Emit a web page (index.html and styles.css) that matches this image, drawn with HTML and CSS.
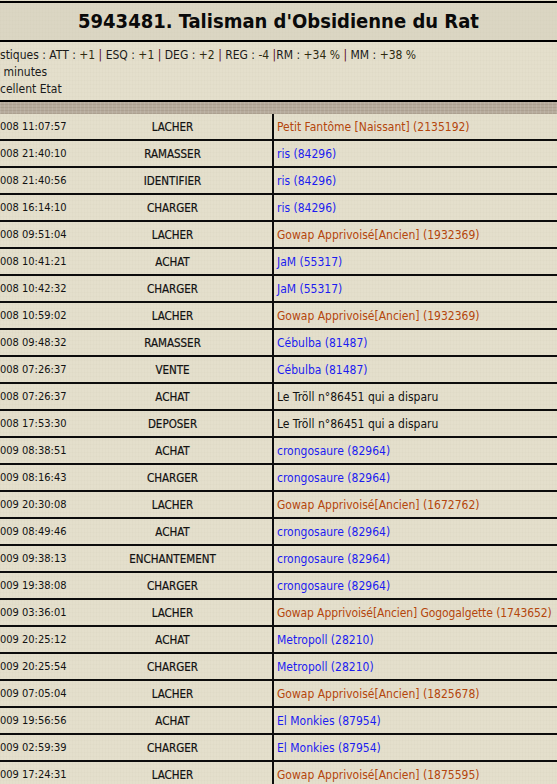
FILE: index.html
```html
<!DOCTYPE html>
<html lang="fr">
<head>
<meta charset="utf-8">
<title>Talisman d'Obsidienne du Rat</title>
<link rel="stylesheet" href="styles.css">
</head>
<body>
<div class="page">
  <h1 class="title">5943481. Talisman d'Obsidienne du Rat</h1>
  <div class="info">
    <div class="info-line">stiques : ATT : <span class="val">+1</span> <span class="sep">|</span> ESQ : <span class="val">+1</span> <span class="sep">|</span> DEG : <span class="val">+2</span> <span class="sep">|</span> REG : <span class="val">-4</span> <span class="sep">|</span>RM : <span class="val">+34 %</span> <span class="sep">|</span> MM : <span class="val">+38 %</span></div>
    <div class="info-line">&nbsp;minutes</div>
    <div class="info-line">cellent Etat</div>
  </div>
  <div class="strip"></div>
  <table class="history">
    <colgroup><col class="c-date"><col class="c-act"><col class="c-who"></colgroup>
    <tbody>
      <tr><td class="date">008 11:07:57</td><td class="act">LACHER</td><td class="who monster">Petit Fantôme [Naissant] (2135192)</td></tr>
      <tr><td class="date">008 21:40:10</td><td class="act">RAMASSER</td><td class="who troll">ris (84296)</td></tr>
      <tr><td class="date">008 21:40:56</td><td class="act">IDENTIFIER</td><td class="who troll">ris (84296)</td></tr>
      <tr><td class="date">008 16:14:10</td><td class="act">CHARGER</td><td class="who troll">ris (84296)</td></tr>
      <tr><td class="date">008 09:51:04</td><td class="act">LACHER</td><td class="who monster">Gowap Apprivoisé[Ancien] (1932369)</td></tr>
      <tr><td class="date">008 10:41:21</td><td class="act">ACHAT</td><td class="who troll">JaM (55317)</td></tr>
      <tr><td class="date">008 10:42:32</td><td class="act">CHARGER</td><td class="who troll">JaM (55317)</td></tr>
      <tr><td class="date">008 10:59:02</td><td class="act">LACHER</td><td class="who monster">Gowap Apprivoisé[Ancien] (1932369)</td></tr>
      <tr><td class="date">008 09:48:32</td><td class="act">RAMASSER</td><td class="who troll">Cébulba (81487)</td></tr>
      <tr><td class="date">008 07:26:37</td><td class="act">VENTE</td><td class="who troll">Cébulba (81487)</td></tr>
      <tr><td class="date">008 07:26:37</td><td class="act">ACHAT</td><td class="who">Le Tröll n°86451 qui a disparu</td></tr>
      <tr><td class="date">008 17:53:30</td><td class="act">DEPOSER</td><td class="who">Le Tröll n°86451 qui a disparu</td></tr>
      <tr><td class="date">009 08:38:51</td><td class="act">ACHAT</td><td class="who troll">crongosaure (82964)</td></tr>
      <tr><td class="date">009 08:16:43</td><td class="act">CHARGER</td><td class="who troll">crongosaure (82964)</td></tr>
      <tr><td class="date">009 20:30:08</td><td class="act">LACHER</td><td class="who monster">Gowap Apprivoisé[Ancien] (1672762)</td></tr>
      <tr><td class="date">009 08:49:46</td><td class="act">ACHAT</td><td class="who troll">crongosaure (82964)</td></tr>
      <tr><td class="date">009 09:38:13</td><td class="act">ENCHANTEMENT</td><td class="who troll">crongosaure (82964)</td></tr>
      <tr><td class="date">009 19:38:08</td><td class="act">CHARGER</td><td class="who troll">crongosaure (82964)</td></tr>
      <tr><td class="date">009 03:36:01</td><td class="act">LACHER</td><td class="who monster long">Gowap Apprivoisé[Ancien] Gogogalgette (1743652)</td></tr>
      <tr><td class="date">009 20:25:12</td><td class="act">ACHAT</td><td class="who troll">Metropoll (28210)</td></tr>
      <tr><td class="date">009 20:25:54</td><td class="act">CHARGER</td><td class="who troll">Metropoll (28210)</td></tr>
      <tr><td class="date">009 07:05:04</td><td class="act">LACHER</td><td class="who monster">Gowap Apprivoisé[Ancien] (1825678)</td></tr>
      <tr><td class="date">009 19:56:56</td><td class="act">ACHAT</td><td class="who troll">El Monkies (87954)</td></tr>
      <tr><td class="date">009 02:59:39</td><td class="act">CHARGER</td><td class="who troll">El Monkies (87954)</td></tr>
      <tr><td class="date">009 17:24:31</td><td class="act">LACHER</td><td class="who monster">Gowap Apprivoisé[Ancien] (1875595)</td></tr>
    </tbody>
  </table>
</div>
</body>
</html>
```

FILE: styles.css
```css
html, body {
  margin: 0;
  padding: 0;
}
body {
  background-color: #e4dfcc;
  background-image:
    repeating-linear-gradient(90deg, rgba(120,110,80,0.025) 0 1px, transparent 1px 3px),
    repeating-linear-gradient(0deg, rgba(120,110,80,0.025) 0 1px, transparent 1px 4px);
  font-family: "DejaVu Sans Condensed", "DejaVu Sans", sans-serif;
  color: #111;
  overflow: hidden;
}
.page {
  width: 557px;
}
.title {
  margin: 0;
  margin-top: 1px;
  height: 37px;
  border-top: 2px solid #000;
  border-bottom: 2px solid #000;
  background: rgba(200, 195, 175, 0.3);
  font-size: 20px;
  font-weight: bold;
  line-height: 37px;
  text-align: center;
  color: #0a0a0a;
}
.info {
  padding: 5px 0 2px 0;
  border-bottom: 2px solid #000;
  font-size: 12px;
  line-height: 17px;
  color: #1a1a1a;
}
.info-line {
  white-space: nowrap;
}
.val {
  color: #2e2a10;
}
.sep {
  color: #5a0a22;
}
.strip {
  height: 12px;
  background-color: #b6ab9c;
  background-image:
    repeating-linear-gradient(90deg, rgba(255,255,255,0.1) 0 1px, transparent 1px 4px),
    repeating-linear-gradient(0deg, rgba(80,60,40,0.1) 0 1px, transparent 1px 3px);
}
.history {
  width: 557px;
  border-collapse: collapse;
  table-layout: fixed;
  font-size: 12px;
}
.c-date { width: 73px; }
.c-act { width: 200px; }
.history td {
  height: 25px;
  padding: 0;
  border-bottom: 2px solid #0c0c0c;
  white-space: nowrap;
  overflow: hidden;
  vertical-align: middle;
}
.history td.date {
  font-size: 11px;
  color: #111;
}
.history td.act {
  text-align: center;
  font-size: 11.5px;
  border-right: 2px solid #0c0c0c;
  color: #111;
  -webkit-text-stroke: 0.2px #111;
}
.history td.who {
  padding-left: 3px;
}
.history td.long {
  letter-spacing: -0.1px;
}
.monster {
  color: #b4460c;
}
.troll {
  color: #1c1cf0;
}
```
